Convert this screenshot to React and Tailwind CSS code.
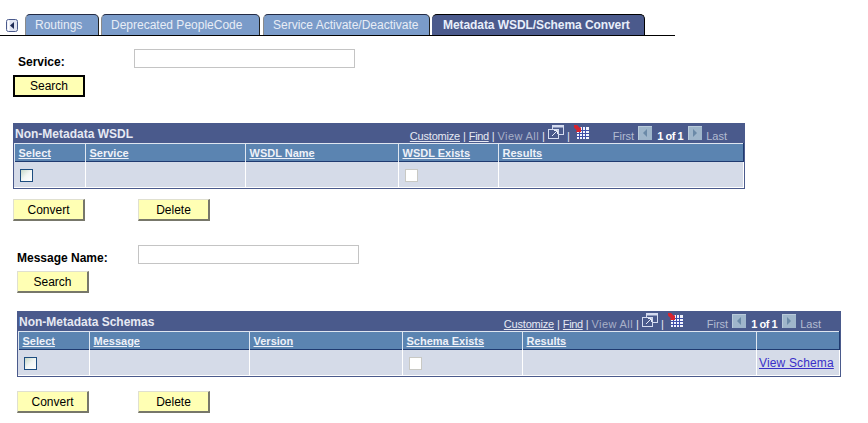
import React from "react";

const tabs = [
  { label: "Routings", width: "w-[74px] mr-[2px]" },
  { label: "Deprecated PeopleCode", width: "w-[159px] mr-[3px]" },
  { label: "Service Activate/Deactivate", width: "w-[167px] mr-[2px]" },
];

function BackIcon() {
  return (
    <svg width="12" height="13" viewBox="0 0 12 13" className="ml-[6px] mr-[7px] mt-[5px] shrink-0">
      <rect x="0.5" y="0.5" width="11" height="12" rx="2" fill="#dfe3f2" stroke="#4a5a8c" />
      <rect x="1.5" y="1.5" width="2" height="10" fill="#ffffff" />
      <path d="M8 3 L4 6.5 L8 10 Z" fill="#1e2a55" />
    </svg>
  );
}

function PopupIcon() {
  return (
    <svg width="16" height="15" viewBox="0 0 16 15" className="shrink-0">
      <rect x="4.5" y="0.5" width="11" height="9" fill="none" stroke="#d5dcf0" />
      <rect x="4.5" y="0.5" width="11" height="2" fill="#d5dcf0" />
      <rect x="0.5" y="4.5" width="10" height="9" fill="#4a5a8c" stroke="#d5dcf0" />
      <path d="M4 11 L9 6 M6 5.5 H9.5 V9" fill="none" stroke="#e8ecf8" />
    </svg>
  );
}

function GridIcon() {
  return (
    <svg width="15" height="15" viewBox="0 0 15 15" className="shrink-0">
      <rect x="3" y="2" width="12" height="12" fill="#f2f4fc" />
      <path d="M5.5 2V14M8.5 2V14M11.5 2V14M3 5.5H15M3 8.5H15M3 11.5H15" stroke="#3f4fa8" />
      <path d="M0 0 L3 0 L6 3 L7 1.5 L7 7 L1.5 7 L3 5.5 L0 2.5 Z" fill="#d8232e" />
    </svg>
  );
}

function NavIcon({ dir }) {
  return (
    <svg width="14" height="14" viewBox="0 0 14 14" className="shrink-0">
      <rect width="14" height="14" fill="#9fb6cb" />
      <path d="M0 0H14V1H1V14H0Z" fill="#b9cbdb" />
      {dir === "prev" ? (
        <path d="M9 3 L5 7 L9 11 Z" fill="#6b8aa8" />
      ) : (
        <path d="M5 3 L9 7 L5 11 Z" fill="#6b8aa8" />
      )}
    </svg>
  );
}

function Checkbox({ disabled }) {
  if (disabled) {
    return <div className="mt-[1px] w-[13px] h-[13px] border border-[#c9c9c4] bg-white" />;
  }
  return (
    <div className="mt-[1px] w-[13px] h-[13px] border border-[#1d4d80] bg-gradient-to-br from-[#c8d8c8] via-[#f2f6f4] to-[#ffffff]" />
  );
}

function Btn({ label, focused }) {
  return (
    <button
      className={`h-[22px] w-[72px] text-[12px] text-black bg-[#ffffb4] border border-t-[#e0e0d0] border-l-[#e0e0d0] border-r-2 border-b-2 border-r-[#77776a] border-b-[#77776a] ${focused ? "!border-2 !border-black" : ""}`}
    >
      {label}
    </button>
  );
}

function Toolbar({ title, padding }) {
  return (
    <div className={`h-[19px] flex items-end justify-between text-[#e6e9f3] ${padding}`}>
      <span className="pl-[1px] text-[12px] font-bold leading-[17px]">{title}</span>
      <div className="flex items-end h-[18px] text-[11px] leading-[13px]">
        <a className="underline tracking-[-0.2px]">Customize</a>
        <span className="ml-[3px]">|</span>
        <a className="underline ml-[3px] tracking-[-0.4px]">Find</a>
        <span className="ml-[3px]">|</span>
        <span className="ml-[3px] text-[#a8b0c8] tracking-[0.4px]">View All</span>
        <span className="ml-[3px]">|</span>
        <div className="ml-[3px] mb-[3px]"><PopupIcon /></div>
        <span className="ml-[3px]">|</span>
        <div className="ml-[4px] mb-[3px]"><GridIcon /></div>
        <span className="ml-[24px] text-[#b4bcd2]">First</span>
        <div className="ml-[4px] mb-[3px]"><NavIcon dir="prev" /></div>
        <span className="ml-[5px] font-bold text-white tracking-[-0.45px]">1 of 1</span>
        <div className="ml-[5px] mb-[3px]"><NavIcon dir="next" /></div>
        <span className="ml-[4px] text-[#b4bcd2]">Last</span>
      </div>
    </div>
  );
}

function GridTable({ title, columns, grid, width, margin, padding, link }) {
  return (
    <div className={`border border-[#4a5a8c] bg-[#4a5a8c] ${width} ${margin}`}>
      <Toolbar title={title} padding={padding} />
      <div className={`grid ${grid} h-[19px] bg-[#5b84b1] border-b border-r border-b-[#1f3a70] border-r-[#1f3a70]`}>
        {columns.map((col, i) => (
          <div
            key={i}
            className="border-t border-l border-[#dfe6f0] pl-[3.5px] text-[11px] font-bold leading-[18px] text-[#eef1f8] underline"
          >
            {col}
          </div>
        ))}
      </div>
      <div className={`grid ${grid} h-[26px] bg-[#d5dbe8] border-b border-r border-white`}>
        {columns.map((col, i) => (
          <div key={i} className={`flex items-center pl-[6px] ${i > 0 ? "border-l border-white" : ""}`}>
            {i === 0 && <Checkbox />}
            {i === 3 && <Checkbox disabled />}
            {link && i === columns.length - 1 && (
              <a className="-ml-[4px] text-[12px] text-[#3a2fc8] underline tracking-[0.15px]">{link}</a>
            )}
          </div>
        ))}
      </div>
    </div>
  );
}

export default function App() {
  return (
    <div className="w-[868px] h-[423px] bg-white overflow-hidden font-['Liberation_Sans',Arial,sans-serif]">
      {/* Tabs */}
      <div className="pt-[14px]">
        <div className="flex h-[22px] w-[675px] border-b border-black">
          <BackIcon />
          {tabs.map((tab) => (
            <div
              key={tab.label}
              className={`${tab.width} h-[21px] rounded-t-[5px] bg-[#7a9bc9] border-t border-l border-r border-t-[#222a44] border-l-[#8a8a8a] border-r-[#222] text-[12px] leading-[21px] text-[#e8edf6] pl-[9px]`}
            >
              {tab.label}
            </div>
          ))}
          <div className="w-[213px] h-[21px] rounded-t-[5px] bg-[#4b5a8c] border-t border-r border-t-black border-r-black text-[12px] font-bold leading-[21px] text-[#e8eefa] pl-[11px] tracking-[-0.07px]">
            Metadata WSDL/Schema Convert
          </div>
        </div>
      </div>

      {/* Service search */}
      <div className="flex mt-[13px] pl-[18px]">
        <label className="w-[116px] h-[19px] pt-[7px] text-[12px] font-bold leading-[12px] text-black">Service:</label>
        <input className="w-[221px] h-[19px] border border-[#c4c4c4] bg-white" />
      </div>
      <div className="flex mt-[7px] pl-[13px]">
        <Btn label="Search" focused />
      </div>

      <GridTable
        title="Non-Metadata WSDL"
        columns={["Select", "Service", "WSDL Name", "WSDL Exists", "Results"]}
        grid="grid-cols-[71px_160px_153px_100px_245px]"
        width="w-[732px]"
        margin="mt-[26px] ml-[13px]"
        padding="pr-[17px]"
      />
      <div className="flex mt-[10px] pl-[13px] gap-[53px]">
        <Btn label="Convert" />
        <Btn label="Delete" />
      </div>

      {/* Message search */}
      <div className="flex mt-[24px] pl-[17px]">
        <label className="w-[121px] h-[19px] pt-[7px] text-[12px] font-bold leading-[12px] text-black">Message Name:</label>
        <input className="w-[221px] h-[19px] border border-[#c4c4c4] bg-white" />
      </div>
      <div className="flex mt-[7px] pl-[17px]">
        <Btn label="Search" />
      </div>

      <GridTable
        title="Non-Metadata Schemas"
        columns={["Select", "Message", "Version", "Schema Exists", "Results", ""]}
        grid="grid-cols-[71px_160px_153px_120px_234px_83px]"
        width="w-[824px]"
        margin="mt-[18px] ml-[17px]"
        padding="pr-[19px]"
        link="View Schema"
      />
      <div className="flex mt-[14px] pl-[17px] gap-[49px]">
        <Btn label="Convert" />
        <Btn label="Delete" />
      </div>
    </div>
  );
}
